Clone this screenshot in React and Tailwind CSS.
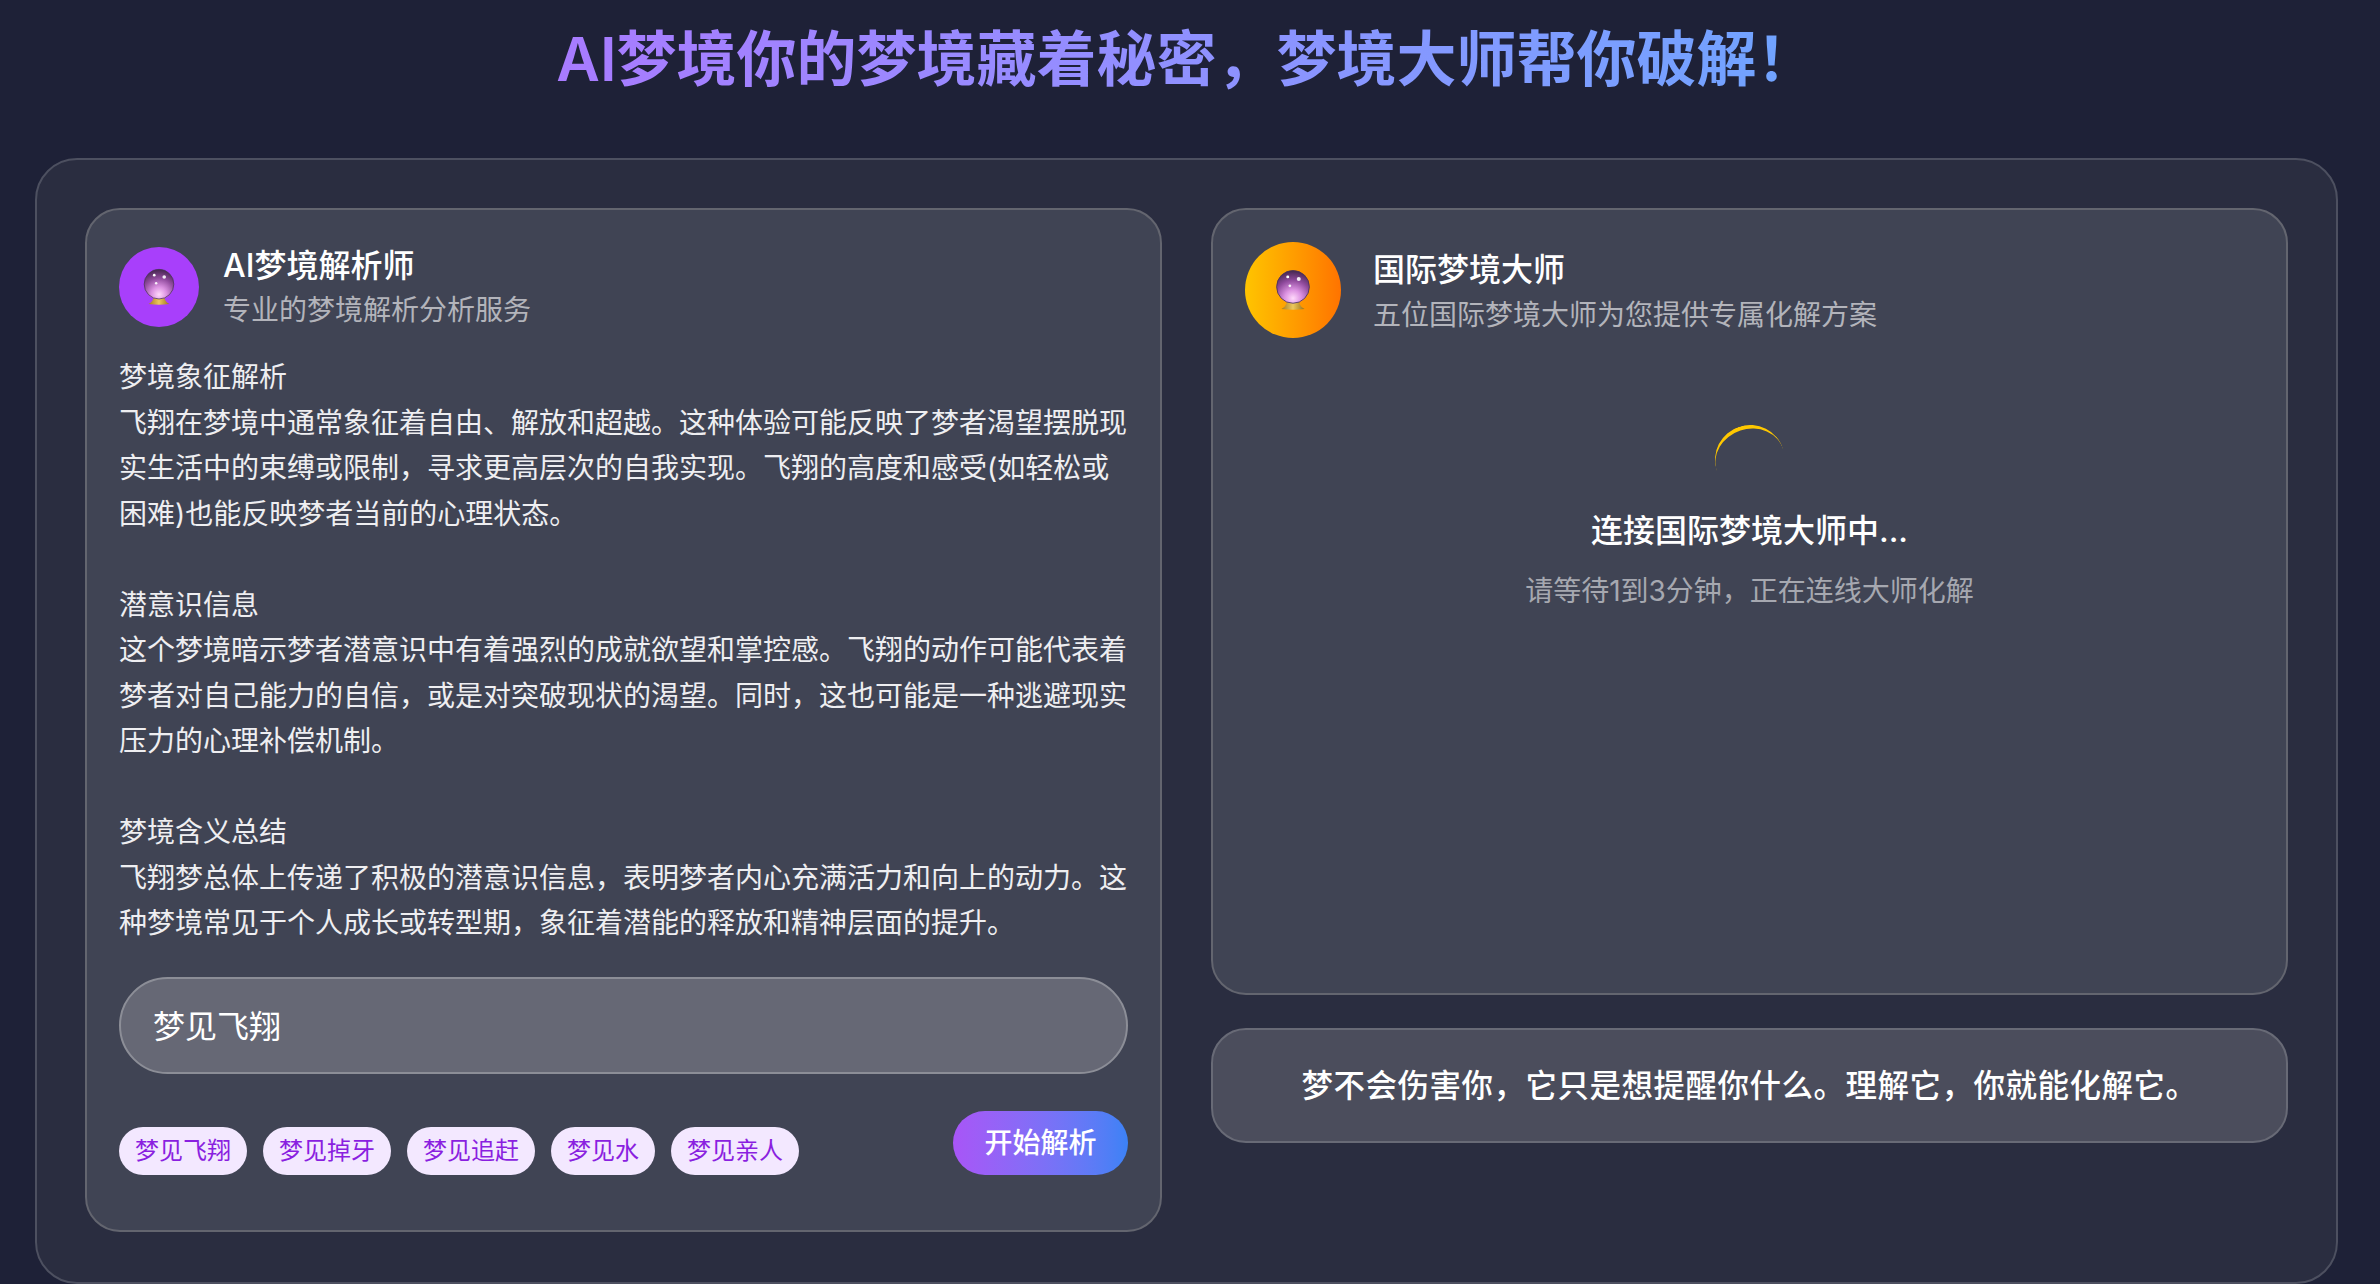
const FONT = "font-['Inter','Noto_Sans_CJK_SC',sans-serif]";

const CHIPS = ["梦见飞翔", "梦见掉牙", "梦见追赶", "梦见水", "梦见亲人"];

const ANALYSIS = `梦境象征解析
飞翔在梦境中通常象征着自由、解放和超越。这种体验可能反映了梦者渴望摆脱现
实生活中的束缚或限制，寻求更高层次的自我实现。飞翔的高度和感受(如轻松或
困难)也能反映梦者当前的心理状态。

潜意识信息
这个梦境暗示梦者潜意识中有着强烈的成就欲望和掌控感。飞翔的动作可能代表着
梦者对自己能力的自信，或是对突破现状的渴望。同时，这也可能是一种逃避现实
压力的心理补偿机制。

梦境含义总结
飞翔梦总体上传递了积极的潜意识信息，表明梦者内心充满活力和向上的动力。这
种梦境常见于个人成长或转型期，象征着潜能的释放和精神层面的提升。`;

// crystal ball emoji, drawn since no colour emoji font is available
function CrystalBall({ className, id }) {
  return (
    <svg viewBox="0 0 40 40" className={className}>
      <defs>
        <radialGradient id={`${id}-ball`} cx="50%" cy="85%" r="85%">
          <stop offset="0%" stopColor="#ffd9fb" />
          <stop offset="30%" stopColor="#dc93e2" />
          <stop offset="65%" stopColor="#8f4a9c" />
          <stop offset="100%" stopColor="#43264e" />
        </radialGradient>
        <linearGradient id={`${id}-base`} x1="0" y1="0" x2="1" y2="0">
          <stop offset="0%" stopColor="#a87c1e" />
          <stop offset="50%" stopColor="#ecc85e" />
          <stop offset="100%" stopColor="#9c7218" />
        </linearGradient>
      </defs>
      <path d="M9 38 C13 36 14 33 14.5 30 H25.5 C26 33 27 36 31 38 C24 39 16 39 9 38 Z" fill={`url(#${id}-base)`} />
      <circle cx="20" cy="17" r="15.6" fill={`url(#${id}-ball)`} stroke="#4a3358" strokeWidth="0.8" />
      <circle cx="15" cy="7.5" r="1.4" fill="#fff" />
      <circle cx="25.5" cy="9.5" r="1.9" fill="#fff" opacity="0.9" />
      <circle cx="17" cy="16" r="1.3" fill="#fff" opacity="0.9" />
    </svg>
  );
}

function AppHeader({ title, subtitle, avatar, gap, textPad, subGap }) {
  return (
    <div className={`flex items-center ${gap}`}>
      {avatar}
      <div className={textPad}>
        <h2 className="text-[32px] leading-[45px] font-medium text-white">{title}</h2>
        <p className={`${subGap} text-[28px] leading-[42px] text-[#b3b4bb]`}>{subtitle}</p>
      </div>
    </div>
  );
}

export default function App() {
  return (
    <div className={`${FONT} h-[1284px] overflow-hidden bg-[#1e2137] pr-[42px] pl-[35px]`}>
      <h1 className="h-[158px] pt-[24px] text-center text-[60px] leading-[70px] font-semibold">
        <span className="bg-gradient-to-r from-[#a87bff] to-[#6ea4ff] bg-clip-text text-transparent">
          AI梦境你的梦境藏着秘密，梦境大师帮你破解！
        </span>
      </h1>

      <div className="grid grid-cols-2 items-start gap-[49px] rounded-[42px] border-2 border-[#4d5060] bg-[#2a2d40] p-[48px] pb-[50px]">
        {/* left: analysis */}
        <div className="rounded-[35px] border-2 border-[#63656f] bg-[#404454] px-[32px] pt-[33px] pb-[55px]">
          <AppHeader
            title="AI梦境解析师"
            subtitle="专业的梦境解析分析服务"
            gap="gap-[24px]"
            textPad=""
            subGap="mt-[1px]"
            avatar={
              <div className="flex h-[80px] w-[80px] items-center justify-center rounded-full bg-[#a83ffb]">
                <CrystalBall id="left" className="h-[38px] w-[38px]" />
              </div>
            }
          />
          <p className="mt-[24px] text-[28px] leading-[45.5px] font-normal whitespace-pre-line text-[#eeeef1]">
            {ANALYSIS}
          </p>
          <div className="mt-[30px] flex h-[97px] items-center rounded-full border-2 border-[#8c8e97] bg-[#666875] px-[32px] pt-[3px] text-[32px] text-white">
            梦见飞翔
          </div>
          <div className="mt-[37px] flex items-end justify-between">
            <div className="flex gap-[16px]">
              {CHIPS.map((chip) => (
                <span
                  key={chip}
                  className="flex h-[48px] items-center rounded-full bg-[#f3e8ff] px-[16px] text-[24px] text-[#8a1fe0]"
                >
                  {chip}
                </span>
              ))}
            </div>
            <button className="flex h-[64px] w-[175px] items-center justify-center rounded-full bg-gradient-to-r from-[#a855f7] to-[#3b82f6] text-[28px] font-medium text-white">
              开始解析
            </button>
          </div>
        </div>

        {/* right: masters */}
        <div className="flex flex-col gap-[33px]">
          <div className="flex h-[787px] flex-col rounded-[35px] border-2 border-[#63656f] bg-[#404454] px-[32px] pt-[32px]">
            <AppHeader
              title="国际梦境大师"
              subtitle="五位国际梦境大师为您提供专属化解方案"
              gap="gap-[32px]"
              textPad="pt-[3px]"
              subGap="mt-[2px]"
              avatar={
                <div className="flex h-[96px] w-[96px] items-center justify-center rounded-full bg-gradient-to-r from-[#ffc400] to-[#ff7300]">
                  <CrystalBall id="right" className="h-[42px] w-[42px]" />
                </div>
              }
            />
            <div className="mt-[87px] flex flex-col items-center">
              <div className="h-[70px] w-[70px] -rotate-[18deg] rounded-full border-t-4 border-t-[#ffc800]" />
              <p className="mt-[12px] text-[32px] leading-[47px] font-medium text-white">连接国际梦境大师中...</p>
              <p className="mt-[14px] text-[28px] leading-[47px] text-[#a6a8b0]">请等待1到3分钟，正在连线大师化解</p>
            </div>
          </div>
          <div className="flex h-[115px] items-center justify-center rounded-[35px] border-2 border-[#686a76] bg-[#4b4d5c] text-[31.5px] font-medium tracking-[0.5px] text-white">
            梦不会伤害你，它只是想提醒你什么。理解它，你就能化解它。
          </div>
        </div>
      </div>
    </div>
  );
}
